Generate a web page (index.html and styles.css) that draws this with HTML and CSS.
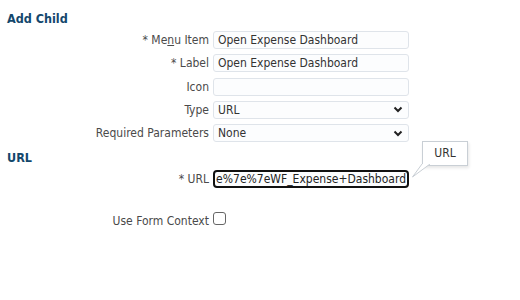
FILE: index.html
```html
<!DOCTYPE html>
<html lang="en">
<head>
    <meta charset="UTF-8">
    <title>Add Child</title>
    <link rel="stylesheet" href="styles.css">
</head>
<body>
    <main class="page">
        <h2 class="section-title">Add Child</h2>
        <div class="form">
            <label class="label">* Me<u>n</u>u Item</label>
            <div class="field"><input class="input" type="text" value="Open Expense Dashboard"></div>

            <label class="label">* Label</label>
            <div class="field"><input class="input" type="text" value="Open Expense Dashboard"></div>

            <label class="label">Icon</label>
            <div class="field"><input class="input" type="text" value=""></div>

            <label class="label">Type</label>
            <div class="field">
                <div class="select">
                    <span>URL</span>
                    <svg class="chevron" width="10" height="7" viewBox="0 0 10 7"><path d="M1.5 1.5 L5 5 L8.5 1.5" fill="none" stroke="#222" stroke-width="2"/></svg>
                </div>
            </div>

            <label class="label">Required Parameters</label>
            <div class="field">
                <div class="select">
                    <span>None</span>
                    <svg class="chevron" width="10" height="7" viewBox="0 0 10 7"><path d="M1.5 1.5 L5 5 L8.5 1.5" fill="none" stroke="#222" stroke-width="2"/></svg>
                </div>
            </div>
        </div>

        <h2 class="section-title url-title">URL</h2>
        <div class="form url-form">
            <label class="label">* URL</label>
            <div class="field">
                <div class="input focused"><span class="scrolled">e%7e%7eWF_Expense+Dashboard</span></div>
                <div class="tooltip">
                    URL
                    <svg class="tail" width="24" height="14" viewBox="0 0 24 14"><path d="M10 0 L0.5 13 L18 0" fill="#fff" stroke="#c9cfd5" stroke-width="1"/></svg>
                </div>
            </div>
        </div>

        <div class="form check-form">
            <label class="label">Use Form Context</label>
            <div class="field"><span class="checkbox"></span></div>
        </div>
    </main>
</body>
</html>
```

FILE: styles.css
```css
body {
    margin: 0;
    font-family: "DejaVu Sans Condensed", "DejaVu Sans", sans-serif;
    font-size: 12px;
    color: #333;
    background: #fff;
}
.page {
    padding: 10px 0 0 7px;
}
.section-title {
    margin: 0;
    font-size: 12.5px;
    font-weight: bold;
    color: #13476c;
    line-height: 18px;
}
.form {
    display: grid;
    grid-template-columns: 202px 196px;
    column-gap: 4px;
    row-gap: 5.3px;
    align-items: center;
    margin-top: 3px;
}
.label {
    text-align: right;
    color: #4a4a4a;
    line-height: 18px;
}
.label u {
    text-decoration-thickness: 1px;
}
.field {
    position: relative;
    height: 18px;
}
.input {
    box-sizing: border-box;
    width: 100%;
    height: 18px;
    margin: 0;
    padding: 0 4px;
    border: 1px solid #dfe4ea;
    border-radius: 3px;
    background: #fcfdfe;
    font: inherit;
    color: #333;
    line-height: 16px;
    outline: none;
}
.select {
    box-sizing: border-box;
    height: 18px;
    padding: 0 5px 0 4px;
    border: 1px solid #dfe4ea;
    border-radius: 3px;
    background: #fcfdfe;
    display: flex;
    align-items: center;
    justify-content: space-between;
    line-height: 16px;
}
.url-title {
    margin-top: 7px;
}
.url-form {
    margin-top: 3px;
}
.focused {
    display: flex;
    justify-content: flex-end;
    border: 2px solid #111;
    border-radius: 4px;
    overflow: hidden;
    white-space: nowrap;
    padding: 0 1px;
    line-height: 14px;
    color: #222;
}
.scrolled {
    flex-shrink: 0;
}
.tooltip {
    position: absolute;
    left: 209px;
    top: -29px;
    width: 46px;
    height: 25px;
    box-sizing: border-box;
    border: 1px solid #c9cfd5;
    background: #fff;
    box-shadow: 1px 2px 3px rgba(0, 0, 0, 0.1);
    text-align: center;
    line-height: 23px;
    color: #333;
}
.tail {
    position: absolute;
    left: -11px;
    top: 22px;
}
.check-form {
    margin-top: 24px;
}
.checkbox {
    display: block;
    box-sizing: border-box;
    width: 13px;
    height: 13px;
    margin-top: 0;
    border: 1px solid #666;
    border-radius: 3px;
}
```
